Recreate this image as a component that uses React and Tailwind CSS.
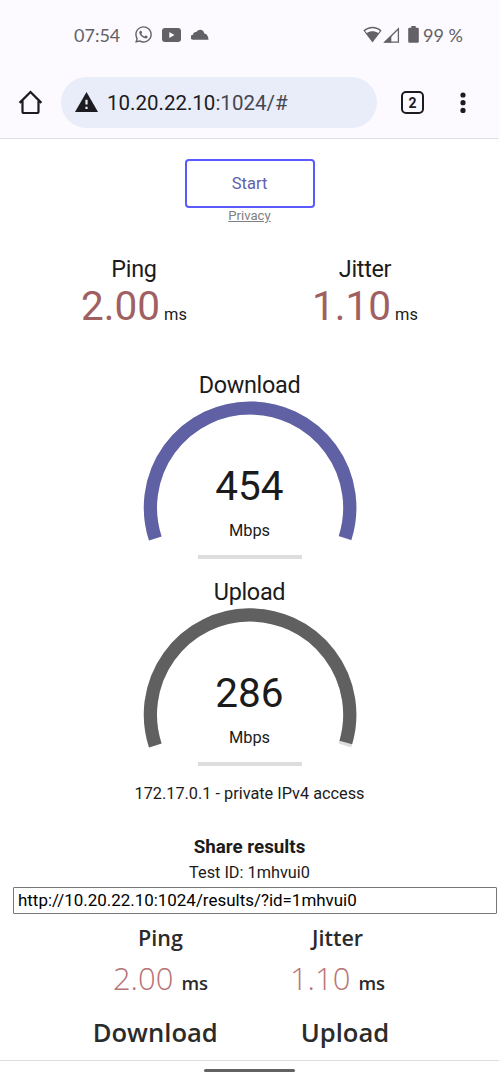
import { FaWhatsapp } from "react-icons/fa";

function StatusBar() {
  return (
    <div className="flex h-[68px] shrink-0 items-center pt-[2px] pr-[36px] pl-[73px] font-['Lato',sans-serif] text-[18px] leading-none text-[#626166]">
      <span className="-mt-[1px] w-[61px] pl-[1px]">07:54</span>
      <FaWhatsapp className="-mt-[1px] size-[19px]" />
      <svg className="-mt-[1px] ml-[9px] h-[14px] w-[19px]" viewBox="0 0 19 14">
        <rect width="19" height="14" rx="3" fill="currentColor" />
        <path d="M7.3 4v6l5.2-3z" fill="#fcfaff" />
      </svg>
      <svg className="-mt-[2px] ml-[10px] h-[11px] w-[18px]" viewBox="0 0 18 11">
        <path d="M2.3 10.8a2.3 2.3 0 0 1-.2-5.1C2 3.6 4.100 2.700 5.300 3.100 7.500-.6 12.800 0 13.300 4.500 15.400 4.400 17.600 7.500 17.500 10.800z" fill="currentColor" />
      </svg>
      <span className="grow" />
      <svg className="-mt-[1px] h-[17px] w-[19px]" viewBox="0 0 19 17">
        <path d="M.4 4.600C5.700-.4 13.300-.4 18.600 4.600L9.500 16.500z" fill="currentColor" />
        <path d="M2.100 5.100C6.500 1.300 12.500 1.300 16.900 5.100L15.200 7.100C11.800 4.500 7.200 4.500 3.800 7.100z" fill="#fcfaff" />
      </svg>
      <svg className="ml-[1px] h-[16px] w-[17px]" viewBox="0 0 17 16">
        <path d="M1.800 15.200H15.400V1.700z" fill="none" stroke="currentColor" strokeWidth="1.300" />
        <path d="M1 15.500 8.300 8.200V15.500z" fill="currentColor" />
      </svg>
      <svg className="-mt-[1px] ml-[8px] h-[17px] w-[11px]" viewBox="0 0 11 17">
        <path d="M3.300 0h4.400v1.700H9.500a1.300 1.300 0 0 1 1.300 1.300v12.500a1.300 1.300 0 0 1-1.300 1.300h-8A1.300 1.300 0 0 1 .2 15.500V3a1.300 1.300 0 0 1 1.300-1.300h1.800z" fill="currentColor" />
      </svg>
      <span className="-mt-[1px] ml-[4px]">99 %</span>
    </div>
  );
}

function AddressBar() {
  return (
    <div className="flex h-[69px] shrink-0 items-center text-[#1c1b1f]">
      <svg className="ml-[18px] size-[25px]" viewBox="0 0 25 25" fill="none" stroke="currentColor" strokeWidth="2.200">
        <path d="M1.600 12.900 12.500 2l10.900 10.900M4.500 10.200V21.500a1.500 1.500 0 0 0 1.500 1.500H19a1.500 1.500 0 0 0 1.500-1.500V10.200" />
      </svg>
      <div className="ml-[18px] flex h-[51px] w-[316px] items-center rounded-full bg-[#e8edf9] pl-[14px]">
        <svg className="-mt-[2px] h-[20px] w-[23px]" viewBox="0 0 23 20">
          <path d="M11.500 0 23 20H0z" fill="currentColor" />
          <path d="M10.400 7.700h2.200v4.800h-2.200zM10.400 14.700h2.200v2.200h-2.200z" fill="#e8edf9" />
        </svg>
        <span className="mt-[1px] ml-[9px] text-[20.500px] leading-none">
          10.20.22.10<span className="text-[#46464f]">:1024/#</span>
        </span>
      </div>
      <div className="ml-[24px] flex size-[23px] items-center justify-center rounded-[5px] border-2 border-[#1c1b1f] text-[14px] leading-none font-bold">
        2
      </div>
      <svg className="ml-[36px] h-[22px] w-[6px]" viewBox="0 0 6 22" fill="currentColor">
        <circle cx="3" cy="3" r="2.600" />
        <circle cx="3" cy="10.700" r="2.600" />
        <circle cx="3" cy="18.400" r="2.600" />
      </svg>
    </div>
  );
}

function Reading({ name, value }) {
  return (
    <div className="flex w-[231px] flex-col items-center">
      <h2 className="h-[26px] text-[23.400px] leading-[26px] tracking-[-0.300px]">{name}</h2>
      <div className="flex h-[48px] items-baseline leading-[48px]">
        <span className="text-[40.500px] text-[#a06061]">{value}</span>
        <span className="ml-[4px] text-[16.400px]">ms</span>
      </div>
    </div>
  );
}

function Meter({ name, value, color, arc }) {
  return (
    <section className="flex h-[207px] flex-col items-center">
      <h2 className="h-[26px] text-[23.400px] leading-[27px] tracking-[-0.300px]">{name}</h2>
      <div className="grid h-[157px] w-[214px]">
        <svg className="[grid-area:1/1]" width="214" height="157" viewBox="0 0 214 157" fill="none" strokeWidth="13.200">
          <path d="M12.290 140.540A99.700 99.700 0 1 1 201.910 140.540" stroke="#dddddd" />
          <path d={arc} stroke={color} />
        </svg>
        <div className="flex flex-col items-center pt-[62px] [grid-area:1/1]">
          <span className="h-[52px] text-[40.500px] leading-[52px]">{value}</span>
          <span className="mt-[9px] h-[20px] text-[16.400px] leading-[20px]">Mbps</span>
        </div>
      </div>
      <div className="h-[4px] w-[104px] bg-[#dddddd]" />
    </section>
  );
}

function SharedReading({ name, value }) {
  return (
    <div className="flex w-[177px] flex-col items-center">
      <span className="h-[30px] text-[21.500px] leading-[28px] font-semibold">{name}</span>
      <div className="flex h-[48px] items-baseline leading-[48px]">
        <span className="text-[31px] font-light text-[#b67475]">{value}</span>
        <span className="ml-[8px] text-[18.500px] font-semibold">ms</span>
      </div>
    </div>
  );
}

export default function App() {
  return (
    <div className="flex h-[1080px] w-[499px] flex-col overflow-hidden bg-white font-['Roboto',sans-serif] text-[#1b1b1b]">
      <header className="flex h-[139px] shrink-0 flex-col border-b border-[#dfdfe9] bg-[#fcfaff]">
        <StatusBar />
        <AddressBar />
      </header>
      <main className="flex h-[921px] shrink-0 flex-col items-center overflow-hidden pt-[20px]">
        <button className="h-[49px] w-[130px] shrink-0 rounded-[4px] border-[2px] border-[#5a5aff] pt-[2px] text-[16.500px] text-[#6060aa]">
          Start
        </button>
        <a href="#" className="h-[15px] shrink-0 text-[13.100px] leading-[15px] text-[#808080] underline">
          Privacy
        </a>
        <div className="mt-[33px] flex shrink-0">
          <Reading name="Ping" value="2.00" />
          <Reading name="Jitter" value="1.10" />
        </div>
        <div className="mt-[42px] flex shrink-0 flex-col">
          <Meter name="Download" value="454" color="#6060a4" arc="M12.290 140.540A99.700 99.700 0 1 1 202.070 140.020" />
          <Meter name="Upload" value="286" color="#606060" arc="M12.290 140.540A99.700 99.700 0 1 1 202.810 137.520" />
        </div>
        <p className="-mt-[2px] h-[20px] shrink-0 text-[16.300px] leading-[20px]">172.17.0.1 - private IPv4 access</p>
        <h3 className="mt-[31px] h-[24px] shrink-0 text-[18.800px] leading-[24px] font-bold">Share results</h3>
        <p className="mt-[4px] h-[20px] shrink-0 text-[16.300px] leading-[20px]">Test ID: 1mhvui0</p>
        <div className="mt-[4px] ml-[11px] flex h-[27px] w-[484px] shrink-0 items-center rounded-[1px] border border-[#767676] pl-[4px] text-[16.950px] text-black">
          http://10.20.22.10:1024/results/?id=1mhvui0
        </div>
        <div className="mt-[10px] -ml-[1px] flex h-[150px] shrink-0 flex-col font-['Open_Sans',sans-serif] text-[#2b2b2b]">
          <div className="flex">
            <SharedReading name="Ping" value="2.00" />
            <SharedReading name="Jitter" value="1.10" />
          </div>
          <div className="mt-[15px] flex justify-center gap-[83px] pr-[16px] text-[25.600px] leading-[32px] font-semibold">
            <span>Download</span>
            <span>Upload</span>
          </div>
        </div>
      </main>
      <footer className="flex h-[20px] shrink-0 justify-center border-t border-[#dedede] pt-[8px]">
        <div className="h-[3px] w-[91px] rounded-full bg-[#626262]" />
      </footer>
    </div>
  );
}
